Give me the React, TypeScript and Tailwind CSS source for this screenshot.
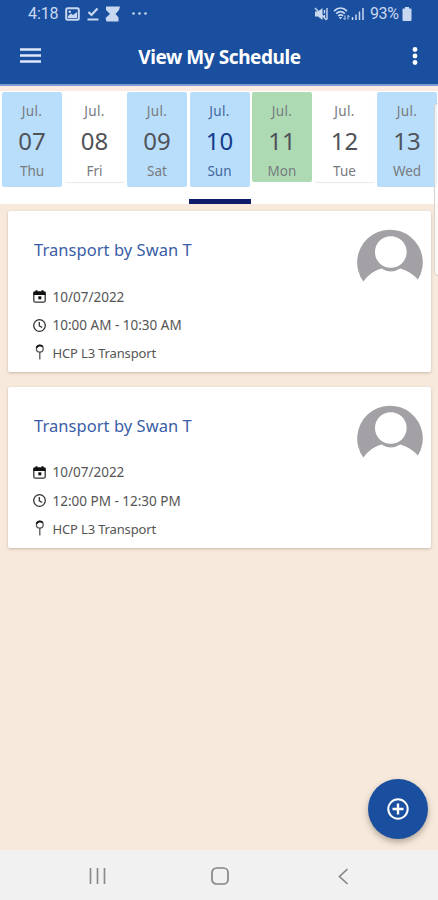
import type { ReactNode } from "react";

interface Day {
  date: string;
  name: string;
  tile: string;
  selected?: boolean;
}

interface Shift {
  id: number;
  title: string;
  date: string;
  time: string;
  place: string;
}

const days: Day[] = [
  { date: "07", name: "Thu", tile: "h-[95px] bg-[#b9defb]" },
  { date: "08", name: "Fri", tile: "h-[90px] bg-white shadow-[0_1px_1px_#e8e8e8]" },
  { date: "09", name: "Sat", tile: "h-[95px] bg-[#b9defb]" },
  { date: "10", name: "Sun", tile: "h-[95px] bg-[#b9defb]", selected: true },
  { date: "11", name: "Mon", tile: "h-[90px] bg-[#aedab3]" },
  { date: "12", name: "Tue", tile: "h-[90px] bg-white shadow-[0_1px_1px_#e8e8e8]" },
  { date: "13", name: "Wed", tile: "h-[95px] bg-[#b9defb]" },
];

const shifts: Shift[] = [
  { id: 1, title: "Transport by Swan T", date: "10/07/2022", time: "10:00 AM - 10:30 AM", place: "HCP L3 Transport" },
  { id: 2, title: "Transport by Swan T", date: "10/07/2022", time: "12:00 PM - 12:30 PM", place: "HCP L3 Transport" },
];

function StatusBar() {
  return (
    <div className="h-[27px] flex items-center pl-[28px] pr-[26px] font-['Roboto',sans-serif] text-[16px] text-[#c9d8f1]">
      <span className="w-[31px] tracking-[-0.1px]">4:18</span>
      <svg className="ml-[6px]" width="15" height="14" viewBox="0 0 15 14">
        <rect x="1.2" y="1.2" width="12.6" height="11.6" rx="1.5" fill="none" stroke="currentColor" strokeWidth="2" />
        <path d="M3 11V9l3-2.5 2 1.5L12 5v6z" fill="currentColor" />
        <circle cx="4.8" cy="4.8" r="1.2" fill="currentColor" />
      </svg>
      <svg className="ml-[7px]" width="12" height="14" viewBox="0 0 12 14">
        <path d="M1.5 5l3 3L10.5 1.5M.5 12.5h11" fill="none" stroke="currentColor" strokeWidth="2.2" />
      </svg>
      <svg className="ml-[6px]" width="15" height="16" viewBox="0 0 15 16">
        <path d="M1 .5h14L14 4l-3.5 4 3 3.5v4H1.5L.5 12 5 8 1 4z" fill="currentColor" />
      </svg>
      <svg className="ml-[12px]" width="15" height="3" viewBox="0 0 15 3">
        <circle cx="1.5" cy="1.5" r="1.3" fill="currentColor" />
        <circle cx="7.5" cy="1.5" r="1.3" fill="currentColor" />
        <circle cx="13.5" cy="1.5" r="1.3" fill="currentColor" />
      </svg>

      <svg className="ml-auto" width="14" height="14" viewBox="0 0 14 14">
        <path d="M1 4.5h3L8.5 1v12L4 9.5H1z" fill="currentColor" />
        <path d="M1 1l11.5 12M10.5 3v3.5M10.5 8v2M13 1v11.5" fill="none" stroke="currentColor" strokeWidth="1.4" />
      </svg>
      <svg className="ml-[5px]" width="17" height="14" viewBox="0 0 17 14">
        <path d="M1 4.2c4-4 9-4 13 0M3.2 6.7c2.8-2.6 6-2.6 8.6 0M5.2 9c1.4-1.4 3.4-1.4 4.8 0" fill="none" stroke="currentColor" strokeWidth="1.7" />
        <path d="M5.8 10h3.4l-1.7 2.5z" fill="currentColor" />
        <path d="M12 8.5v4M10.5 11l1.5 1.7M15 12.5v-4M16.5 10L15 8.3" fill="none" stroke="currentColor" strokeWidth="1" />
      </svg>
      <svg className="ml-[1px]" width="14" height="13" viewBox="0 0 14 13">
        <path d="M1.5 10v3M5 7.5V13M8.5 4.5V13M12 1v12" fill="none" stroke="currentColor" strokeWidth="1.5" />
      </svg>
      <span className="ml-[5px] w-[31px] tracking-[-0.4px]">93%</span>
      <svg className="ml-[1px]" width="10" height="14" viewBox="0 0 10 14">
        <path d="M3 0h4v1.5h1.5a1 1 0 0 1 1 1V13a1 1 0 0 1-1 1h-7a1 1 0 0 1-1-1V2.5a1 1 0 0 1 1-1H3z" fill="currentColor" />
      </svg>
    </div>
  );
}

function TitleBar() {
  return (
    <div className="h-[57px] flex items-center justify-between pl-[20px] pr-[20px]">
      <svg width="21" height="16" viewBox="0 0 21 16">
        <path d="M0 1.5h21M0 7.5h21M0 13.5h21" stroke="#dfe8fb" strokeWidth="2.5" />
      </svg>
      <h1 className="scale-x-[0.95] whitespace-nowrap text-[20px] leading-[28px] mt-[2px] mr-[14px] font-bold text-white tracking-[-0.45px]">View My Schedule</h1>
      <svg width="6" height="18" viewBox="0 0 6 18">
        <circle cx="3" cy="2.5" r="2.4" fill="#fff" />
        <circle cx="3" cy="9" r="2.4" fill="#fff" />
        <circle cx="3" cy="15.5" r="2.4" fill="#fff" />
      </svg>
    </div>
  );
}

function DayTile({ day }: { day: Day }) {
  return (
    <div className="w-[62.5px] shrink-0 flex flex-col">
      <div
        className={`w-[60px] ml-[2px] rounded-[2px] flex flex-col items-center ${day.tile} ${
          day.selected ? "text-[#42679b]" : "text-[#777b80]"
        }`}
      >
        <span className="mt-[10px] h-[18px] leading-[18px] text-[13.5px] tracking-[0.3px]">Jul.</span>
        <span className={`mt-[6px] h-[30px] leading-[30px] text-[24px] ${day.selected ? "text-[#143c8c]" : "text-[#505358]"}`}>
          {day.date}
        </span>
        <span className="mt-[6px] h-[18px] leading-[18px] text-[13.5px]">{day.name}</span>
      </div>
      {day.selected && <div className="mt-auto w-[62px] h-[5px] ml-[1px] bg-[#0c1c6b]" />}
    </div>
  );
}

function Row({ icon, className, children }: { icon: ReactNode; className: string; children: ReactNode }) {
  return (
    <div className={`h-[28.5px] flex items-center text-[#555] ${className}`}>
      <span className="w-[19.5px] flex shrink-0">{icon}</span>
      {children}
    </div>
  );
}

function CalendarIcon() {
  return (
    <svg width="13" height="13" viewBox="0 0 13 13">
      <rect x=".8" y="2" width="11.4" height="10.2" rx="1.5" fill="none" stroke="#333" strokeWidth="1.3" />
      <path d="M.5 1.8h12V5H.5zM2.5.3h2v2h-2zM8.5.3h2v2h-2z" fill="#111" />
      <rect x="5.3" y="6.3" width="3" height="3" fill="#111" />
    </svg>
  );
}

function ClockIcon() {
  return (
    <svg width="13" height="13" viewBox="0 0 13 13" fill="none" stroke="#333" strokeWidth="1.3">
      <circle cx="6.5" cy="6.5" r="5.8" />
      <path d="M6.3 3v3.8l2.9 1.7" />
    </svg>
  );
}

function PinIcon() {
  return (
    <svg className="-mt-[3px]" width="13" height="16" viewBox="0 0 13 16" fill="none" stroke="#555" strokeWidth="1.3">
      <circle cx="6.8" cy="4.7" r="3.4" />
      <path d="M6.8 8v7.5" />
      <path d="M3.6 3.7a3.5 3.5 0 0 1 6-1" stroke="#111" strokeWidth="1.9" />
    </svg>
  );
}

function Avatar() {
  return (
    <svg className="mt-[17px] shrink-0" width="66" height="54" viewBox="0 0 66 54">
      <path d="M6.3 53.5A32.8 32.8 0 1 1 61 51.5Q53.5 43.5 43.3 40.5A18 18 0 0 1 24.3 40.5Q13.5 43.5 6.3 53.5z" fill="#a3a1a5" />
      <circle cx="33.8" cy="24" r="15.8" fill="#fff" />
    </svg>
  );
}

function ShiftCard({ shift }: { shift: Shift }) {
  return (
    <div className="h-[161px] bg-white rounded-[2px] pl-[25px] pr-[8px] flex justify-between shadow-[0_1px_3px_rgba(120,95,70,0.35)]">
      <div>
        <h2 className="mt-[27px] h-[24px] leading-[24px] pl-[1px] text-[16.5px] text-[#3a5ea6] tracking-[0.05px]">{shift.title}</h2>
        <div className="mt-[20.5px]">
          <Row icon={<CalendarIcon />} className="text-[13.5px]">{shift.date}</Row>
          <Row icon={<ClockIcon />} className="text-[13.5px]">{shift.time}</Row>
          <Row icon={<PinIcon />} className="text-[13px] tracking-[-0.15px]">{shift.place}</Row>
        </div>
      </div>
      <Avatar />
    </div>
  );
}

function NavBar() {
  return (
    <div className="h-[50px] bg-[#f1f1f2] flex items-center justify-between pl-[89px] pr-[89px] pt-[2px]">
      <svg width="17" height="16" viewBox="0 0 17 16">
        <path d="M1.5 0v16M8.5 0v16M15.5 0v16" stroke="#8b8b8c" strokeWidth="1.7" />
      </svg>
      <svg className="mr-[4px]" width="18" height="18" viewBox="0 0 18 18">
        <rect x="1" y="1" width="16" height="16" rx="4.5" fill="none" stroke="#858586" strokeWidth="1.7" />
      </svg>
      <svg width="11" height="17" viewBox="0 0 11 17">
        <path d="M9.5 1L1.5 8.5l8 7.5" fill="none" stroke="#858586" strokeWidth="1.7" />
      </svg>
    </div>
  );
}

export default function App() {
  return (
    <div className="relative w-[438px] h-[900px] overflow-hidden flex flex-col bg-[#f7eadd] font-['Noto_Sans',sans-serif]">
      <header className="h-[84px] shrink-0 bg-[#194f9e]">
        <StatusBar />
        <TitleBar />
      </header>
      <div className="h-[2px] shrink-0 bg-[#7f9bd5]" />
      <div className="h-[5px] shrink-0 bg-[#fcebe2]" />

      <div className="h-[113px] shrink-0 bg-white flex pt-px overflow-hidden">
        {days.map((day) => (
          <DayTile key={day.date} day={day} />
        ))}
      </div>

      <main className="flex-1 pt-[7px] pl-[8px] pr-[7px] flex flex-col gap-[14.5px]">
        {shifts.map((shift) => (
          <ShiftCard key={shift.id} shift={shift} />
        ))}
      </main>

      <NavBar />

      {/* edge panel handle */}
      <div className="absolute left-[434px] top-[103px] w-[8px] h-[173px] rounded-[4px] border border-[#d8d2cc] bg-white/70" />

      <button
        type="button"
        className="absolute left-[368px] top-[779px] w-[60px] h-[60px] rounded-full bg-[#194f9e] flex items-center justify-center shadow-[0_3px_6px_rgba(70,60,50,0.4)]"
      >
        <svg width="22" height="22" viewBox="0 0 22 22" fill="none" stroke="#fff">
          <circle cx="11" cy="11" r="9.7" strokeWidth="2" />
          <path d="M11 5.5v11M5.5 11h11" strokeWidth="2.4" />
        </svg>
      </button>
    </div>
  );
}
